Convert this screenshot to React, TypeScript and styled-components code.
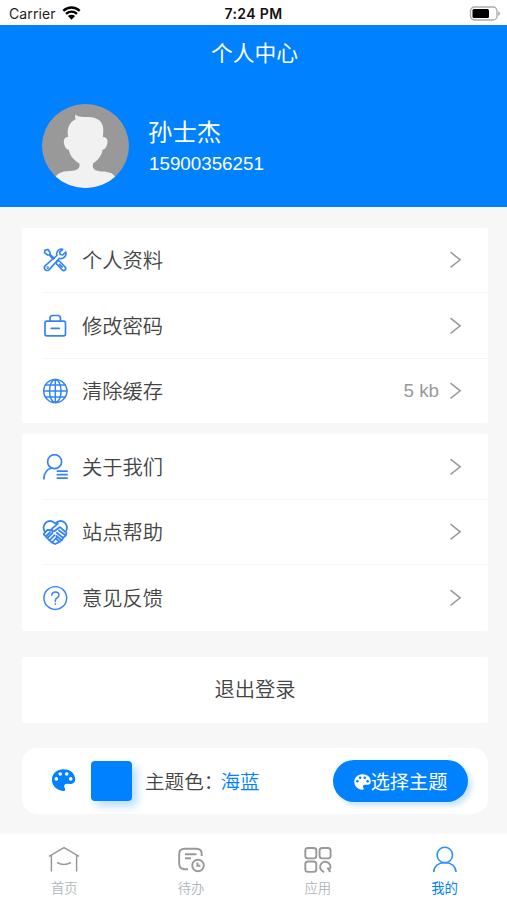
import React from 'react';
import styled, { createGlobalStyle, css } from 'styled-components';

const BLUE = '#0081ff';
const ICON_BLUE = '#3484f5';

const GlobalStyle = createGlobalStyle`
  * { box-sizing: border-box; }
  body {
    margin: 0;
    background: #f7f7f7;
    font-family: "Liberation Sans", "Noto Sans CJK SC", sans-serif;
    color: #444;
  }
  svg { display: block; flex: none; }
`;

const Screen = styled.div`
  width: 507px;
  height: 900px;
  display: flex;
  flex-direction: column;
  overflow: hidden;
  background: #f7f7f7;
`;

const StatusBar = styled.header`
  height: 25px;
  flex: none;
  display: grid;
  grid-template-columns: 1fr auto 1fr;
  align-items: center;
  padding: 2px 6px 0 9px;
  background: #fff;
  font-family: Inter, sans-serif;
  font-size: 14px;
  line-height: 20px;
  color: #222;
`;

const Carrier = styled.div`
  display: flex;
  align-items: center;
  gap: 6px;
  letter-spacing: 0.1px;
  svg { margin-top: -2px; }
`;

const Clock = styled.div`
  font-size: 14px;
  font-weight: 600;
  color: #111;
  letter-spacing: 0.4px;
  padding-right: 3px;
`;

const BatterySlot = styled.div`
  justify-self: end;
  margin-top: -1px;
`;

const Hero = styled.section`
  height: 182px;
  flex: none;
  background: ${BLUE};
  color: #fff;
`;

const Title = styled.h1`
  margin: 0;
  padding: 13px 0 0 2px;
  text-align: center;
  font-size: 21.8px;
  font-weight: 400;
  line-height: 32px;
`;

const Profile = styled.div`
  display: flex;
  align-items: center;
  gap: 19px;
  padding: 34px 0 0 42px;
`;

const ProfileText = styled.div`
  display: flex;
  flex-direction: column;
  padding-top: 1px;
`;

const Name = styled.div`
  font-size: 24.4px;
  line-height: 33px;
`;

const Phone = styled.div`
  padding-left: 1px;
  font-size: 18.8px;
  line-height: 29px;
`;

const Card = styled.section<{ $top: number; $height: number; $round?: boolean }>`
  flex: none;
  width: 466px;
  height: ${p => p.$height}px;
  margin: ${p => p.$top}px 0 0 22px;
  background: #fff;
  border-radius: ${p => (p.$round ? 15 : 2)}px;
`;

const MenuCard = styled(Card)<{ $rows: string }>`
  display: grid;
  grid-template-rows: ${p => p.$rows};
  padding-left: 20px;
`;

const MenuRow = styled.div`
  display: flex;
  align-items: center;
  padding-right: 26px;
  & + & { border-top: 1px solid #f5f5f5; }
`;

const MenuLabel = styled.span`
  flex: 1;
  margin-left: 14px;
  padding-top: 2px;
  font-size: 20.3px;
  font-weight: 350;
  line-height: 30px;
`;

const MenuValue = styled.span`
  margin-right: 10px;
  color: #999;
  font-size: 18.8px;
  line-height: 28px;
`;

const Logout = styled(Card)`
  display: flex;
  align-items: center;
  justify-content: center;
  padding-bottom: 4px;
  font-size: 20.3px;
  font-weight: 350;
`;

const ThemeCard = styled(Card)`
  display: flex;
  align-items: center;
  padding: 0 20px 0 28px;
`;

const PaletteSlot = styled.span`
  padding-bottom: 3px;
`;

const Swatch = styled.span`
  width: 41px;
  height: 40px;
  margin: 0 13px 0 14px;
  border-radius: 4px;
  background: ${BLUE};
  box-shadow: 5px 5px 9px rgba(0, 129, 255, 0.28);
`;

const ThemeText = styled.div`
  flex: 1;
  padding-bottom: 2px;
  font-size: 19.6px;
  font-weight: 350;
  white-space: nowrap;
`;

const ThemeName = styled.span`
  color: ${BLUE};
  margin-left: -3px;
`;

const ThemeButton = styled.button`
  display: flex;
  align-items: center;
  justify-content: center;
  width: 135px;
  height: 42px;
  padding: 3px 0 0;
  border: 0;
  border-radius: 21px;
  background: ${BLUE};
  color: #fff;
  font: 400 19.2px/28px "Liberation Sans", "Noto Sans CJK SC", sans-serif;
  box-shadow: 4px 4px 5px rgba(0, 129, 255, 0.2);
  svg { margin-top: -2px; }
`;

const TabBar = styled.nav`
  display: grid;
  grid-template-columns: repeat(4, 1fr);
  height: 66px;
  flex: none;
  margin-top: 20px;
  background: #fff;
`;

const Tab = styled.div<{ $active?: boolean }>`
  display: flex;
  flex-direction: column;
  align-items: center;
  padding: 11px 0 0 2px;
  font-size: 13.4px;
  font-weight: 350;
  line-height: 20px;
  color: #b0b5ba;
  svg { color: #999; margin-bottom: 5px; }
  ${p => p.$active && css`
    color: ${BLUE};
    font-weight: 400;
    svg { color: #2c92fa; }
  `}
`;

const Stroke = ({ children, w = 1.5 }: { children: React.ReactNode; w?: number }) => (
  <svg width="26" height="26" viewBox="0 0 26 26" fill="none" stroke={ICON_BLUE}
    strokeWidth={w} strokeLinecap="round" strokeLinejoin="round">{children}</svg>
);

const ToolsIcon = () => (
  <Stroke w={1.65}>
    <path d="M3 3.1 6 2.5l2.2 3.2-.2 1.6 4.1 4.1M3 3.1l-.4 2.8L5.8 8l1.5-.1 3.8 4.2" />
    <path d="m14.8 14.1 2.2-.4 6.2 6.4c1.7 2-.9 4.5-2.9 2.9l-6-6.2.5-2.7ZM17.4 17.3l2.8 2.8" />
    <path d="M20.7 2.3c-4-.9-7 2.7-5.8 6.2L3.3 18.7c-2.6 2.6 1.1 6.6 3.9 3.9L17.4 11.3c3.8 1.2 7.4-2.3 6.4-6.3L20.6 8l-2.4-.5-.5-2.3Z" />
    <circle cx="5.7" cy="20.6" r=".45" />
  </Stroke>
);

const CaseIcon = () => (
  <Stroke w={1.7}>
    <rect x="3" y="8.1" width="20.5" height="14.7" rx="1.8" />
    <path d="M8 7.9V5.4c0-2 .9-2.9 2.8-2.9h4.8c1.9 0 2.9.9 2.9 2.9v2.5M9.2 15.3h8.2" />
  </Stroke>
);

const GlobeIcon = () => (
  <Stroke w={1.5}>
    <circle cx="13.3" cy="13" r="11.6" />
    <ellipse cx="13.3" cy="13" rx="5.8" ry="11.6" />
    <path d="M13.3 1.4v23.2M1.7 13h23.2M3.4 7h19.8M3.4 19h19.8" />
  </Stroke>
);

const PersonListIcon = () => (
  <Stroke w={1.7}>
    <circle cx="12.6" cy="7.7" r="7" />
    <path d="M1.9 24.8c.1-5.6 3-9.5 7.8-10.8M15.4 17.2h9.7M15.4 20.7h9.7M15.4 24.2h9.7" />
  </Stroke>
);

const HandshakeIcon = () => (
  <Stroke w={1.8}>
    <path d="M13.3 4.3C9.4.7 4.1 1.4 2.2 6c-1 2.5-.6 5 .8 7.2L5.5 11l5 .2M13.3 4.3c3.9-3.6 9.2-2.9 11.1 1.7 1 2.5.6 5-.8 7.2L18 8.1l-5.5 4c-2.2 1-3.8-.9-2.4-2.5l5.8-5" />
    <path d="m3 13.2-1.2 2.1 2 2.2 4.3-4.3M5.2 19.2l5.2-5.2M7.5 21.4l5.1-5.2M10 23.5l4.7-5M3.8 17.5l1.4 1.7 2.3 2.2 2.5 2.1 3 1.5 3-1.3 1.8-1.4 2.2-1.2 1.1-2.3 2.5-2.2.9-2.4M14.6 20.2l3.1 2.6M14.5 17l5.2 4.2M14.8 13.7l6.4 5.3M17 11.5l6.8 5" />
  </Stroke>
);

const QuestionIcon = () => (
  <Stroke w={1.45}>
    <circle cx="13.3" cy="13" r="11.4" />
    <path d="M9.8 10.3c0-4.4 7.1-4.2 7.1-.1 0 2.8-3.6 2.7-3.6 5.5v.8M13.3 18.8v.4" />
  </Stroke>
);

const Chevron = () => (
  <svg width="13" height="18" viewBox="0 0 13 18" fill="none" stroke="#999" strokeWidth="1.5">
    <path d="m1.5 1.2 9.7 7.6-9.7 7.6" />
  </svg>
);

const Palette = ({ width, height, color, hole }: { width: number; height: number; color: string; hole: string }) => (
  <svg width={width} height={height} viewBox="0 0 24 22">
    <path fill={color} d="M12 .2C5.4.2.4 4.6.4 11c0 5.8 5 10.3 11.2 11 2.1.2 2.7-1.5 1.6-3.1-1.4-2.1-.1-4.3 2.5-4.1l3.4.1c3 .1 4.6-1.7 4.6-4.3C23.7 4.4 18.8.2 12 .2Z" />
    <g fill={hole}>
      <circle cx="4.8" cy="9.9" r="1.8" />
      <circle cx="8.7" cy="5" r="1.8" />
      <circle cx="15.2" cy="5" r="1.8" />
      <circle cx="19.2" cy="9.9" r="1.8" />
    </g>
  </svg>
);

const Avatar = () => (
  <svg width="87" height="84" viewBox="0 0 87 84">
    <defs><clipPath id="avatar-disc"><ellipse cx="43.5" cy="42" rx="43.5" ry="42" /></clipPath></defs>
    <g clipPath="url(#avatar-disc)">
      <path fill="#999" d="M0 0h87v84H0z" />
      <path fill="#f1f1f1" d="M33.5 10.5c1.8 2.1 5 2.4 8.9 2.5 13-.8 19.2 4.2 18.9 13.4l-.4 6.5c2.5 0 4.6 1.5 4.6 4.1 0 3.6-1.5 8.5-5 8.8-.7 5.5-4 10.2-9.3 13.5-1.3 4.3.4 7.2 5.9 7.9C65 67.5 70 68 73.5 73v13h-60V73c3-4.7 8.5-5.9 16.7-6.2 5.7-.4 8.2-3.1 7.1-7.3-5.3-3.2-9.4-7.7-10.5-13.7-3.1-.2-4.8-4.4-5-8.3-.2-2.9 2-4.6 4.4-4.6-1.6-7.1.4-14.5 7.6-17.6-.7-1.4-1-3-.3-4.8Z" />
    </g>
  </svg>
);

const Wifi = () => (
  <svg width="19" height="14" viewBox="0 0 19 14">
    <path d="M1.3 4.8c4.8-4.4 11.6-4.4 16.4 0M4 7.8c3.3-2.9 7.7-2.9 11 0" fill="none" stroke="#000" strokeWidth="2.4" />
    <path d="M5.9 10.1c2.2-1.8 5-1.8 7.2 0L9.5 13.7Z" fill="#000" />
  </svg>
);

const Battery = () => (
  <svg width="32" height="15" viewBox="0 0 32 15">
    <rect x="1.5" y="1" width="26.5" height="13" rx="4" fill="#fff" stroke="#aaa" strokeWidth="1.3" />
    <rect x="3.5" y="3" width="16.5" height="9" rx="1.5" />
    <path d="M29.2 5.2c2.4.9 2.4 3.7 0 4.6Z" fill="#aaa" />
  </svg>
);

const TabSvg = ({ children, w = 1.7 }: { children: React.ReactNode; w?: number }) => (
  <svg width="32" height="29" viewBox="0 0 32 29" fill="none" stroke="currentColor" strokeWidth={w}>{children}</svg>
);

const HomeIcon = () => (
  <TabSvg w={1.5}>
    <path d="M1 11.3 16 2.6l15 8.7M3.4 9.8v16.6M28.6 9.8v16.6M9.1 17.5c4 2.4 9.4 2.4 13.8 0" />
  </TabSvg>
);

const TodoIcon = () => (
  <TabSvg w={1.9}>
    <path d="M13 24.2H9.6c-3.5 0-5.4-2-5.4-5.5V9c0-3.5 1.9-5.3 5.4-5.3h11.8c3.5 0 5.3 1.8 5.3 5.3v2M10 9.2h11.5M10 13.2h6" />
    <circle cx="23" cy="20.5" r="5.8" />
    <path d="M22.4 17.6v3.2h3" />
  </TabSvg>
);

const AppsIcon = () => (
  <TabSvg w={1.9}>
    <rect x="3.3" y="3" width="11" height="10.4" rx="2.6" />
    <rect x="17.6" y="3" width="11" height="10.4" rx="2.6" />
    <rect x="3.3" y="16.5" width="11" height="10.4" rx="2.6" />
    <path d="M22.2 27A5.2 5.2 0 1 1 28 24.1M25.5 22.5l2.8 4.5" />
  </TabSvg>
);

const MineIcon = () => (
  <TabSvg w={1.6}>
    <circle cx="15.8" cy="10" r="7.7" />
    <path d="M4.7 27c.3-6.1 4.8-9.4 11.1-9.4S26.7 20.9 27 27" />
  </TabSvg>
);

type Item = { icon: React.ReactNode; label: string; value?: string };

const accountItems: Item[] = [
  { icon: <ToolsIcon />, label: '个人资料' },
  { icon: <CaseIcon />, label: '修改密码' },
  { icon: <GlobeIcon />, label: '清除缓存', value: '5 kb' },
];

const supportItems: Item[] = [
  { icon: <PersonListIcon />, label: '关于我们' },
  { icon: <HandshakeIcon />, label: '站点帮助' },
  { icon: <QuestionIcon />, label: '意见反馈' },
];

const Menu = ({ items, top, height, rows }: { items: Item[]; top: number; height: number; rows: string }) => (
  <MenuCard $top={top} $height={height} $rows={rows}>
    {items.map(item => (
      <MenuRow key={item.label}>
        {item.icon}
        <MenuLabel>{item.label}</MenuLabel>
        {item.value && <MenuValue>{item.value}</MenuValue>}
        <Chevron />
      </MenuRow>
    ))}
  </MenuCard>
);

export default function App() {
  return (
    <Screen>
      <GlobalStyle />
      <StatusBar>
        <Carrier>Carrier <Wifi /></Carrier>
        <Clock>7:24 PM</Clock>
        <BatterySlot><Battery /></BatterySlot>
      </StatusBar>
      <Hero>
        <Title>个人中心</Title>
        <Profile>
          <Avatar />
          <ProfileText>
            <Name>孙士杰</Name>
            <Phone>15900356251</Phone>
          </ProfileText>
        </Profile>
      </Hero>
      <Menu items={accountItems} top={21} height={195} rows="64px 66px 1fr" />
      <Menu items={supportItems} top={11} height={197} rows="65px 65px 1fr" />
      <Logout $top={26} $height={66}>退出登录</Logout>
      <ThemeCard $top={25} $height={66} $round>
        <PaletteSlot><Palette width={27} height={22} color={BLUE} hole="#fff" /></PaletteSlot>
        <Swatch />
        <ThemeText>主题色：<ThemeName>海蓝</ThemeName></ThemeText>
        <ThemeButton>
          <Palette width={17} height={16} color="#fff" hole={BLUE} />
          选择主题
        </ThemeButton>
      </ThemeCard>
      <TabBar>
        <Tab><HomeIcon />首页</Tab>
        <Tab><TodoIcon />待办</Tab>
        <Tab><AppsIcon />应用</Tab>
        <Tab $active><MineIcon />我的</Tab>
      </TabBar>
    </Screen>
  );
}
